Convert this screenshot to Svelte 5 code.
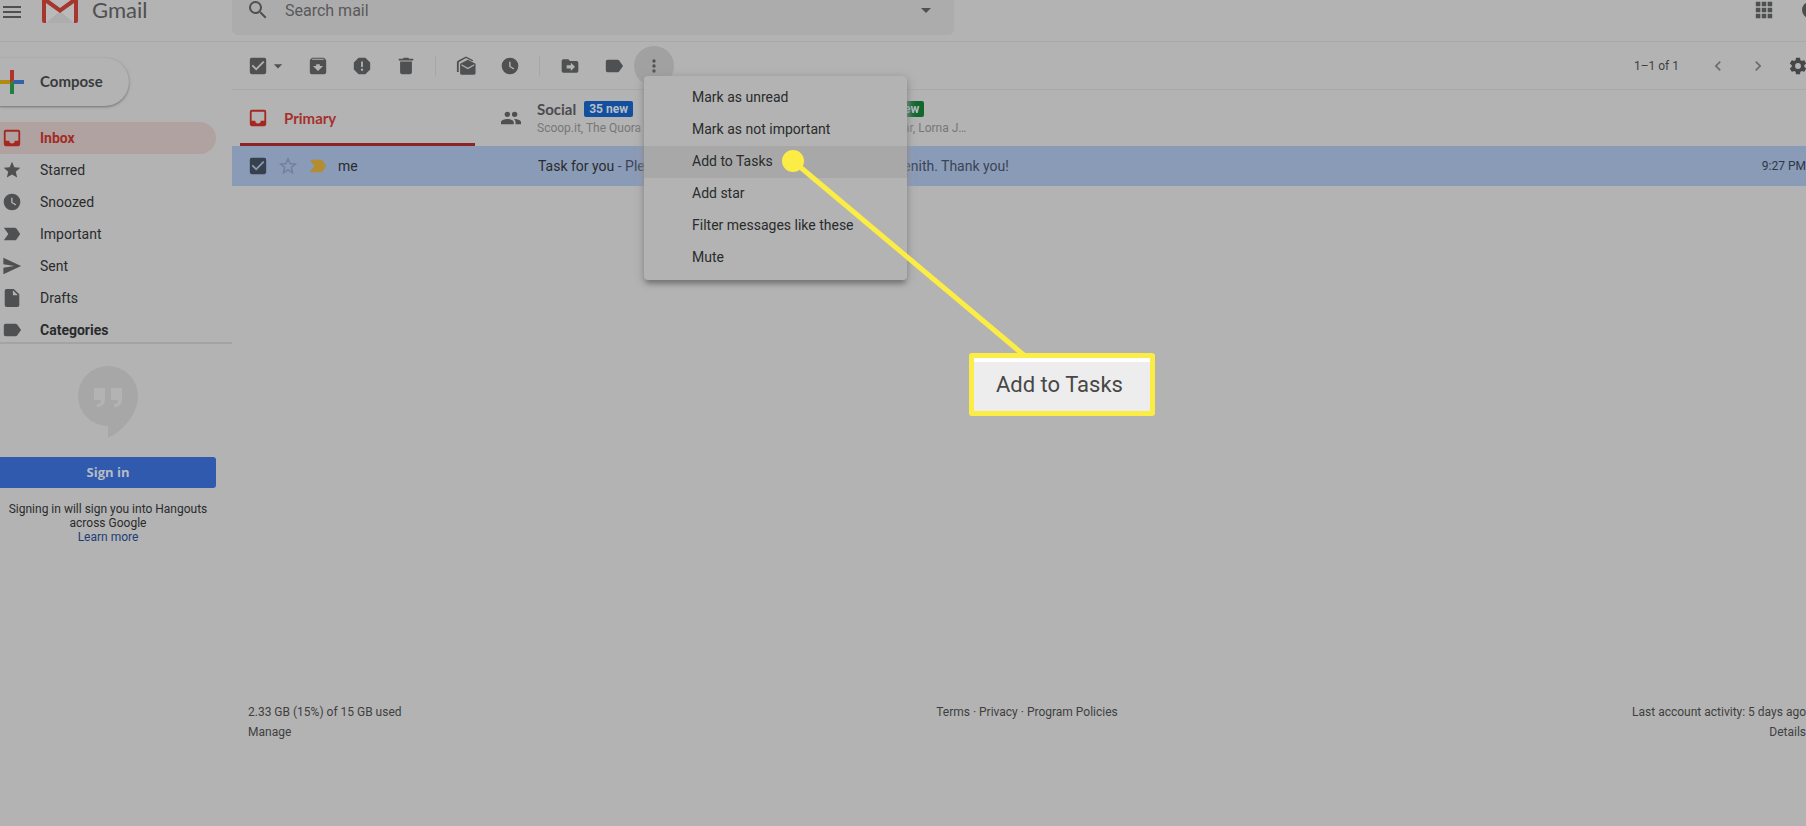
<script>
  const icons = {
    menu: ["3 3 18 18", "M3 6h18v2H3zm0 5h18v2H3zm0 5h18v2H3z"],
    search: ["2 2 20 20", "M15.5 14h-.79l-.28-.27A6.47 6.47 0 0 0 16 9.5 6.5 6.5 0 1 0 9.5 16c1.61 0 3.09-.59 4.23-1.57l.27.28v.79l5 4.99L20.49 19zm-6 0a4.5 4.5 0 1 1 0-9 4.5 4.5 0 0 1 0 9z"],
    apps: ["1 1 22 22", "M3 3h5v5H3zm6.5 0h5v5h-5zM16 3h5v5h-5zM3 9.5h5v5H3zm6.5 0h5v5h-5zm6.5 0h5v5h-5zM3 16h5v5H3zm6.5 0h5v5h-5zm6.5 0h5v5h-5z"],
    check: ["1 1 22 22", "M19 3H5a2 2 0 0 0-2 2v14a2 2 0 0 0 2 2h14a2 2 0 0 0 2-2V5a2 2 0 0 0-2-2zm-9 14-5-5 1.41-1.41L10 14.17l7.59-7.59L19 8z"],
    caret: ["2 2 20 20", "M7 10l5 5 5-5z"],
    smallCaret: ["0 0 24 24", "M7 10l5 5 5-5z"],
    archive: ["1 1 22 22", "M20.54 5.23l-1.39-1.68C18.88 3.21 18.47 3 18 3H6c-.47 0-.88.21-1.16.55L3.46 5.23C3.17 5.57 3 6.02 3 6.5V19c0 1.1.9 2 2 2h14c1.1 0 2-.9 2-2V6.5c0-.48-.17-.93-.46-1.27zM12 17.5L6.5 12H10v-2h4v2h3.5zM5.12 5l.81-1h12l.94 1z"],
    spam: ["1 1 22 22", "M15.73 3H8.27L3 8.27v7.46L8.27 21h7.46L21 15.73V8.27zM12 17.3a1.3 1.3 0 1 1 0-2.6 1.3 1.3 0 0 1 0 2.6zm1-4.3h-2V7h2z"],
    trash: ["1 1 22 22", "M5.5 7v12c0 1.1.9 2 2 2h9c1.1 0 2-.9 2-2V7zM20 4h-4.500l-1-1h-5l-1 1H4v2h16z"],
    mail: ["1 1 22 22", "M22.500 9.500L14 5 5.500 9.500V20a1.500 1.500 0 0 0 1.500 1.500h14a1.500 1.500 0 0 0 1.500-1.500zM14 15.500L7 11.500V10l7 4 7-4v1.500zM4 18.500H2V8c0-.7.3-1.300 1-1.700L12 1.500l8 4.300-1 1-7-3.600-8 4.600z"],
    clock: ["0 0 24 24", "M12 2a10 10 0 1 0 0 20 10 10 0 0 0 0-20zm4.200 14.200L11 13V7h1.700v5.200l4.300 2.600z"],
    move: ["0 0 24 24", "M20 6h-8l-2-2H4a2 2 0 0 0-2 2v12a2 2 0 0 0 2 2h16a2 2 0 0 0 2-2V8a2 2 0 0 0-2-2zm-7 12v-3H8v-4h5V8l5 5z"],
    label: ["1 1 22 22", "M17.630 5.840C17.270 5.330 16.670 5 16 5H5a2 2 0 0 0-2 2v10a2 2 0 0 0 2 2h11c.67 0 1.270-.33 1.630-.84L22 12z"],
    more: ["0 0 24 24", "M12 8a2 2 0 1 0 0-4 2 2 0 0 0 0 4zm0 2a2 2 0 1 0 0 4 2 2 0 0 0 0-4zm0 6a2 2 0 1 0 0 4 2 2 0 0 0 0-4z"],
    prev: ["0 0 24 24", "M15.410 7.410L14 6l-6 6 6 6 1.410-1.410L10.830 12z"],
    next: ["0 0 24 24", "M8.590 16.590L10 18l6-6-6-6-1.410 1.410L13.170 12z"],
    gear: ["0 0 24 24", "M19.430 12.980c.04-.32.07-.64.07-.98s-.03-.66-.07-.98l2.110-1.650c.19-.15.24-.42.12-.64l-2-3.460c-.12-.22-.39-.3-.61-.22l-2.490 1c-.52-.4-1.080-.73-1.690-.98l-.38-2.650A.49.49 0 0 0 14 2h-4c-.25 0-.46.18-.49.42l-.38 2.650c-.61.25-1.170.59-1.690.98l-2.490-1c-.23-.09-.49 0-.61.22l-2 3.460c-.13.22-.07.49.12.64l2.110 1.650c-.04.32-.07.65-.07.98s.03.66.07.98l-2.110 1.650c-.19.15-.24.42-.12.64l2 3.460c.12.22.39.3.61.22l2.490-1c.52.4 1.080.73 1.690.98l.38 2.650c.03.24.24.42.49.42h4c.25 0 .46-.18.49-.42l.38-2.650c.61-.25 1.170-.59 1.690-.98l2.490 1c.23.09.49 0 .61-.22l2-3.460c.12-.22.07-.49-.12-.64zM12 15.500a3.500 3.500 0 1 1 0-7 3.500 3.500 0 0 1 0 7z"],
    inbox: ["1 1 22 22", "M19 3H5a2 2 0 0 0-2 2v14a2 2 0 0 0 2 2h14a2 2 0 0 0 2-2V5a2 2 0 0 0-2-2zm0 12h-4a3 3 0 0 1-6 0H5V5h14z"],
    star: ["0 0 24 24", "M12 17.270L18.180 21l-1.640-7.030L22 9.240l-7.190-.61L12 2 9.190 8.630 2 9.240l5.460 4.730L5.820 21z"],
    starOutline: ["1 1 22 22", "M22 9.240l-7.190-.62L12 2 9.190 8.630 2 9.240l5.460 4.730L5.820 21 12 17.270 18.180 21l-1.630-7.030zM12 15.400l-3.760 2.270 1-4.280-3.320-2.880 4.380-.38L12 6.100l1.710 4.040 4.380.38-3.320 2.880 1 4.280z"],
    important: ["1 1 22 22", "M3 19l5-7-5-7h12c.7 0 1.300.3 1.700.8L21 12l-4.300 6.200c-.4.5-1 .8-1.700.8z"],
    sent: ["1 1 22 22", "M2.500 21L22 12 2.500 3v7l12 2-12 2z"],
    draft: ["1 1 22 22", "M14 2H6a2 2 0 0 0-2 2v16a2 2 0 0 0 2 2h12a2 2 0 0 0 2-2V8zm-1 7V3.500L18.500 9z"],
    people: ["1 1 22 22", "M16 11a3 3 0 1 0 0-6 3 3 0 0 0 0 6zm-8 0a3 3 0 1 0 0-6 3 3 0 0 0 0 6zm0 2c-2.330 0-7 1.170-7 3.500V19h14v-2.500C15 14.170 10.330 13 8 13zm8 0c-.29 0-.62.02-.97.05 1.160.84 1.970 1.970 1.970 3.450V19h6v-2.500c0-2.330-4.670-3.500-7-3.500z"],
  };

  const folders = [
    { name: "Inbox", icon: "inbox" },
    { name: "Starred", icon: "star" },
    { name: "Snoozed", icon: "clock" },
    { name: "Important", icon: "important" },
    { name: "Sent", icon: "sent" },
    { name: "Drafts", icon: "draft" },
    { name: "Categories", icon: "label" },
  ];

  const actions = [
    "Mark as unread",
    "Mark as not important",
    "Add to Tasks",
    "Add star",
    "Filter messages like these",
    "Mute",
  ];

  let folder = $state("Inbox");
  let query = $state("");
  let menuOpen = $state(true);
  let selected = $state(true);
</script>

{#snippet icon(name)}
  <svg class="icon" viewBox={icons[name][0]} aria-hidden="true"><path d={icons[name][1]} /></svg>
{/snippet}

{#snippet tool(name, label)}
  <button class="tool" aria-label={label}>{@render icon(name)}</button>
{/snippet}

<div class="page">
  <header>
    <div class="brand">
      <button class="hamburger" aria-label="Main menu">{@render icon("menu")}</button>
      <svg class="logo" viewBox="0 4 36 23" aria-hidden="true">
        <path fill="#bababa" d="M2 2h32v25H2z" />
        <path fill="#adadad" d="M4 27l14-12 14 12z" />
        <path fill="#a6372e" d="M0 3v22a2 2 0 0 0 2 2h2V7l14 10L32 7v20h2a2 2 0 0 0 2-2V3L33 1 18 12 3 1z" />
      </svg>
      <span class="wordmark">Gmail</span>
    </div>
    <form class="search" onsubmit={(e) => e.preventDefault()}>
      <button class="tool" aria-label="Search">{@render icon("search")}</button>
      <input type="text" aria-label="Search mail" placeholder="Search mail" bind:value={query} />
      <button class="tool" type="button" aria-label="Search options">{@render icon("caret")}</button>
    </form>
    <div class="account">
      {@render tool("apps", "Google apps")}
      <button class="avatar" aria-label="Account"></button>
    </div>
  </header>

  <div class="body">
    <aside>
      <button class="compose">
        <svg viewBox="0 0 24 24" aria-hidden="true">
          <path fill="#b1342b" d="M10 0h4v10l-4 4z" />
          <path fill="#b18a12" d="M0 10h10v4H0z" />
          <path fill="#3561ab" d="M14 10h10v4H12z" />
          <path fill="#208040" d="M10 14l4-4v14h-4z" />
        </svg>
        <span>Compose</span>
      </button>
      <nav>
        {#each folders as item}
          <a
            href="#{item.name.toLowerCase()}"
            class:active={folder === item.name}
            class:strong={item.name === "Categories"}
            onclick={() => (folder = item.name)}
          >
            {@render icon(item.icon)}
            {item.name}
          </a>
        {/each}
      </nav>
      <div class="hangouts">
        <svg viewBox="0 0 60 72" aria-hidden="true">
          <path fill="#a7a7a7" d="M30 0a30 30 0 1 0 0 60v12c15-7 30-24 30-42A30 30 0 0 0 30 0z" />
          <path fill="#b3b3b3" d="M16 22h11v12c0 4-3 7-8 7v-3c3 0 4-1 4-4h-7zM33 22h11v12c0 4-3 7-8 7v-3c3 0 4-1 4-4h-7z" />
        </svg>
        <button class="signin">Sign in</button>
        <p>Signing in will sign you into Hangouts across Google<br /><a href="#hangouts">Learn more</a></p>
      </div>
    </aside>

    <main>
      <div class="toolbar">
        <div class="select">
          <label><input type="checkbox" aria-label="Select all" bind:checked={selected} />{@render icon("check")}</label>
          <button aria-label="Select options">{@render icon("smallCaret")}</button>
        </div>
        {@render tool("archive", "Archive")}
        {@render tool("spam", "Report spam")}
        {@render tool("trash", "Delete")}
        <span class="rule"></span>
        {@render tool("mail", "Mark as read")}
        {@render tool("clock", "Snooze")}
        <span class="rule"></span>
        {@render tool("move", "Move to")}
        {@render tool("label", "Labels")}
        <div class="more">
          <button
            class="more-button"
            aria-label="More"
            aria-expanded={menuOpen}
            onclick={() => (menuOpen = !menuOpen)}
          >
            {@render icon("more")}
          </button>
          {#if menuOpen}
            <div class="menu" role="menu">
              {#each actions as action}
                <button role="menuitem" class:current={action === "Add to Tasks"}>{action}</button>
              {/each}
              <svg class="pointer" viewBox="0 0 260 220" aria-hidden="true">
                <path d="M14 14L246 209" />
                <circle cx="14" cy="14" r="11" />
              </svg>
              <div class="callout">Add to Tasks</div>
            </div>
          {/if}
        </div>
        <div class="pager">
          <span>1–1 of 1</span>
          {@render tool("prev", "Newer")}
          {@render tool("next", "Older")}
          {@render tool("gear", "Settings")}
        </div>
      </div>

      <div class="tabs">
        <button class="tab primary">
          {@render icon("inbox")}
          <span class="title">Primary</span>
        </button>
        <button class="tab">
          {@render icon("people")}
          <span class="info">
            <span class="title">Social <b>35 new</b></span>
            <small>Scoop.it, The Quora Digest</small>
          </span>
        </button>
        <button class="tab">
          {@render icon("label")}
          <span class="info">
            <span class="title">Promotions <b class="green">50 new</b></span>
            <small>Groupon, Ticket Bazaar, Lorna Jane</small>
          </span>
        </button>
      </div>

      <div class="mail">
        <label><input type="checkbox" aria-label="Select message" bind:checked={selected} />{@render icon("check")}</label>
        <button class="star" aria-label="Star">{@render icon("starOutline")}</button>
        <button class="flag" aria-label="Important">{@render icon("important")}</button>
        <span class="sender">me</span>
        <span class="subject">Task for you <span>- Please submit the new project proposal for Zenith. Thank you!</span></span>
        <time>9:27 PM</time>
      </div>

      <footer>
        <div>2.33 GB (15%) of 15 GB used<br /><a href="#manage">Manage</a></div>
        <div><a href="#terms">Terms</a> · <a href="#privacy">Privacy</a> · <a href="#policies">Program Policies</a></div>
        <div class="right">Last account activity: 5 days ago<br /><a href="#details">Details</a></div>
      </footer>
    </main>
  </div>
</div>

<style>
  :global(body) {
    background: #b3b3b3;
  }

  .page {
    min-height: 100vh;
    box-sizing: border-box;
    overflow: hidden;
    display: flex;
    flex-direction: column;
    background: #b3b3b3;
    color: #2a2b2c;
    font: 14px/20px Roboto, "Liberation Sans", sans-serif;
  }

  button, input {
    font: inherit;
    color: inherit;
    background: none;
    border: none;
    padding: 0;
    margin: 0;
  }

  button {
    cursor: pointer;
  }

  a {
    color: inherit;
    text-decoration: none;
  }

  .icon {
    display: block;
    width: 20px;
    height: 20px;
    flex: none;
    fill: #4f5051;
  }

  .tool {
    display: flex;
    justify-content: center;
    width: 44px;
    flex: none;
  }

  header {
    display: flex;
    align-items: flex-start;
    height: 41px;
    border-bottom: 1px solid #a8a8a8;
  }

  .brand {
    display: flex;
    width: 232px;
    flex: none;
  }

  .hamburger {
    padding-left: 3px;
    margin-right: 21px;
  }

  .hamburger .icon {
    width: 18px;
  }

  .logo {
    width: 36px;
    height: 23px;
  }

  .wordmark {
    padding-left: 14px;
    font: 22px/20px Lato, sans-serif;
    color: #4f5051;
  }

  .search {
    display: flex;
    flex: 0 1 722px;
    box-sizing: border-box;
    padding: 0 6px 14px 4px;
    background: #acacac;
    border-radius: 0 0 6px 6px;
  }

  .search input {
    flex: 1;
    min-width: 0;
    margin-left: 5px;
    padding-top: 1px;
    font-size: 16px;
    line-height: 20px;
    height: 20px;
    outline: none;
  }

  .search input::placeholder {
    color: #58595b;
    opacity: 1;
  }

  .account {
    display: flex;
    margin-left: auto;
    margin-right: -12px;
  }

  .avatar {
    width: 16px;
    height: 16px;
    margin: 2px 0 0 16px;
    border-radius: 50%;
    background: #4b4c4e;
  }

  .body {
    display: flex;
    flex: 1;
  }

  aside {
    width: 232px;
    flex: none;
    padding-top: 16px;
  }

  .compose {
    display: flex;
    align-items: center;
    gap: 16px;
    width: 129px;
    height: 48px;
    border-radius: 0 24px 24px 0;
    box-shadow: 0 1px 2px #7a7a7a, 0 1px 3px 1px #a6a6a6;
    font-family: Lato, sans-serif;
    font-size: 15px;
    font-weight: 700;
    color: #3a3b3c;
  }

  .compose span {
    padding-bottom: 2px;
  }

  .compose svg {
    width: 24px;
    height: 24px;
  }

  nav {
    height: 220px;
    margin-top: 16px;
    overflow: hidden;
    border-bottom: 2px solid #a3a3a3;
  }

  nav a {
    display: flex;
    align-items: center;
    gap: 18px;
    height: 32px;
    width: 214px;
    padding-left: 2px;
    border-radius: 0 16px 16px 0;
  }

  nav .active {
    background: #b0a2a0;
    color: #a22c25;
    font-weight: 700;
  }

  nav .active .icon,
  .primary .icon {
    fill: #a52720;
  }

  nav .strong {
    font-weight: 700;
  }

  .hangouts {
    width: 216px;
    padding-top: 22px;
    text-align: center;
    font-size: 12px;
    line-height: 14px;
  }

  .hangouts svg {
    display: block;
    width: 60px;
    height: 72px;
    margin: 0 auto 19px;
  }

  .hangouts p {
    margin: 14px 0 0;
  }

  .hangouts a {
    color: #1d3d78;
  }

  .signin {
    width: 100%;
    height: 31px;
    padding-bottom: 2px;
    border-radius: 0 3px 3px 0;
    background: #305aad;
    color: #b8bcc4;
    font: bold 13px "Open Sans", sans-serif;
  }

  main {
    flex: 1;
    min-width: 0;
    display: flex;
    flex-direction: column;
  }

  .toolbar {
    display: flex;
    align-items: center;
    height: 47px;
    border-bottom: 1px solid #a8a8a8;
    padding-left: 16px;
  }

  .select {
    display: flex;
    width: 48px;
  }

  label {
    position: relative;
    display: block;
    width: 20px;
    height: 20px;
    flex: none;
  }

  label input {
    position: absolute;
    inset: 0;
    opacity: 0;
  }

  .rule {
    width: 1px;
    height: 20px;
    margin: 0 8px 0 7px;
    background: #a6a6a6;
  }

  .more {
    position: relative;
    margin-left: -2px;
  }

  .more-button {
    display: flex;
    align-items: center;
    justify-content: center;
    width: 40px;
    height: 40px;
    border-radius: 50%;
    background: #a1a1a1;
  }

  .menu {
    position: absolute;
    z-index: 1;
    top: 30px;
    left: 10px;
    width: 263px;
    padding: 6px 0;
    border-radius: 4px;
    background: #b3b3b3;
    box-shadow: 0 5px 5px -2px #757575, 0 2px 8px 1px #949494;
  }

  .menu button {
    display: block;
    width: 100%;
    height: 32px;
    padding: 0 0 1px 48px;
    text-align: left;
    white-space: nowrap;
  }

  .menu .current {
    background: #a8a8a8;
  }

  .pointer {
    position: absolute;
    top: 71px;
    left: 135px;
    width: 260px;
    height: 220px;
    fill: #fbed45;
    pointer-events: none;
  }

  .pointer path {
    stroke: #fbed45;
    stroke-width: 5;
  }

  .callout {
    position: absolute;
    top: 277px;
    left: 325px;
    box-sizing: border-box;
    width: 186px;
    height: 63px;
    padding-left: 22px;
    border: 5px solid #fbed45;
    border-radius: 3px;
    background: linear-gradient(#fff 4px, #ededed 4px);
    color: #474747;
    font-size: 22px;
    line-height: 53px;
    white-space: nowrap;
  }

  .pager {
    display: flex;
    align-items: center;
    margin-left: auto;
    margin-right: -12px;
    font-size: 12px;
    color: #3e3f41;
  }

  .pager span {
    margin-right: 19px;
  }

  .pager .tool {
    width: 40px;
  }

  .pager .tool .icon {
    fill: #6b6c6d;
  }

  .pager .tool:last-child .icon {
    fill: #454647;
  }

  .tabs {
    display: flex;
    height: 56px;
    padding-left: 8px;
  }

  .tab {
    display: flex;
    align-items: center;
    gap: 16px;
    box-sizing: border-box;
    width: 235px;
    margin-right: 18px;
    padding-left: 8px;
    text-align: left;
  }

  .tab .info {
    min-width: 0;
    flex: 1;
  }

  .title {
    display: flex;
    align-items: center;
    gap: 8px;
    font-family: Lato, sans-serif;
    font-size: 15px;
    font-weight: 700;
    color: #4b4c4e;
  }

  .title b {
    padding: 0 5px;
    border-radius: 2px;
    background: #124f9f;
    color: #b9bec6;
    font: bold 12px/16px Roboto, sans-serif;
  }

  .title .green {
    background: #11682f;
  }

  .tab small {
    display: block;
    width: 182px;
    overflow: hidden;
    text-overflow: ellipsis;
    white-space: nowrap;
    font-size: 12px;
    line-height: 18px;
    color: #767778;
  }

  .primary {
    border-bottom: 3px solid #8e2325;
    border-radius: 3px 3px 0 0;
    padding-top: 2px;
  }

  .primary .title {
    color: #a6302b;
  }

  .mail {
    display: flex;
    align-items: center;
    height: 40px;
    padding-left: 16px;
    background: #8a9bb8;
    white-space: nowrap;
  }

  .mail label .icon {
    fill: #37414e;
  }

  .star, .flag {
    margin-left: 10px;
  }

  .star .icon {
    fill: #71809a;
  }

  .flag .icon {
    fill: #b38d30;
  }

  .sender {
    width: 190px;
    margin-left: 10px;
  }

  .subject {
    flex: 1;
    min-width: 0;
    margin-left: 10px;
    overflow: hidden;
    text-overflow: ellipsis;
  }

  .subject span {
    color: #3b4454;
  }

  time {
    font-size: 12px;
    color: #2f3744;
  }

  footer {
    display: grid;
    grid-template-columns: 1fr auto 1fr;
    margin: auto 0 84px 16px;
    font-size: 12px;
    color: #3e3f41;
  }

  .right {
    text-align: right;
  }
</style>
